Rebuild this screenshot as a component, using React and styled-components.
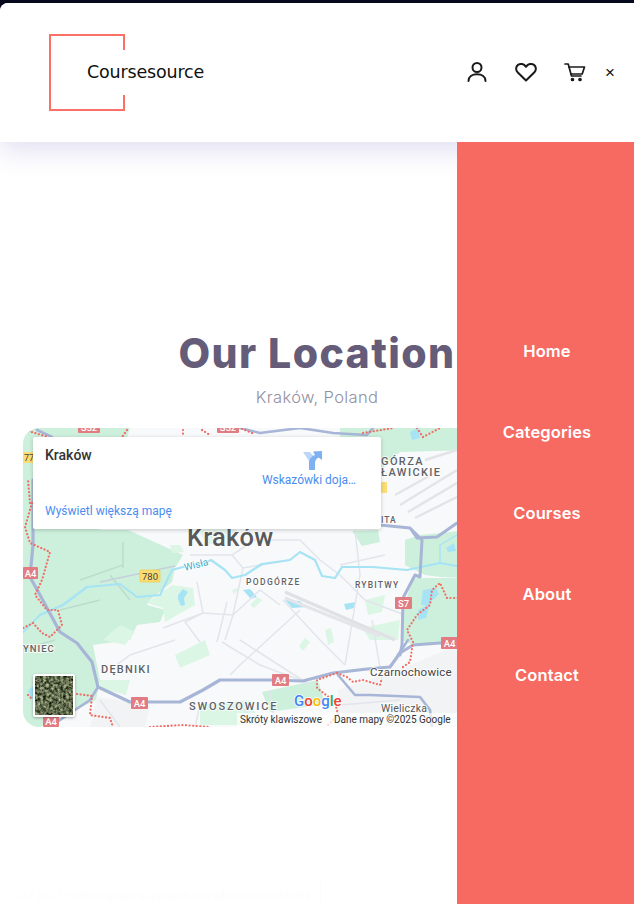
import React from "react";
import styled, { createGlobalStyle } from "styled-components";

const Global = createGlobalStyle`
  html, body { margin: 0; padding: 0; background: #fff; overflow: hidden; }
  * { box-sizing: border-box; }
`;
const Page = styled.div`
  position: relative; width: 634px; height: 904px; overflow: hidden;
  padding-top: 3px; background: #050818; font-family: Inter, "Liberation Sans", sans-serif;
`;
const Surface = styled.div`
  height: 901px; background: #fff; border-radius: 8px 0 0 0; display: flex; flex-direction: column;
`;
const Header = styled.header`
  position: relative; z-index: 2; height: 139px; flex: none; background: #fff; border-radius: 8px 0 0 0;
  box-shadow: 0 8px 28px rgba(70, 60, 170, 0.17);
  display: flex; align-items: center; justify-content: space-between;
  padding: 0 18px 0 49px;
`;
const LogoFrame = styled.a`
  position: relative; width: 76px; height: 77px; display: flex; align-items: center; padding-left: 36px;
  margin-top: -1px; border: solid #fb7168; border-width: 2px 0 2px 2px; text-decoration: none;
  &::before, &::after { content: ""; position: absolute; right: 0; width: 2px; height: 14px; background: #fb7168; }
  &::before { top: 0; }
  &::after { bottom: 0; }
`;
const LogoText = styled.span`
  font: 400 17.5px "DejaVu Sans", sans-serif; color: #111; white-space: nowrap; letter-spacing: -0.18px;
`;
const Tools = styled.div`display: flex; align-items: center; margin-top: -2px;`;
const IconButton = styled.button`
  border: 0; background: none; padding: 0; width: 22px; height: 24px; margin-left: ${p => p.$gap || 0}px;
  display: flex; align-items: center; justify-content: center; color: #1a1a1a;
  svg { display: block; }
`;
const Close = styled.span`
  font: 400 17px "Liberation Sans", sans-serif; color: #111; width: 12px; text-align: center; margin-left: 18px; line-height: 20px; margin-top: 2px;
`;
const Main = styled.main`
  flex: 1; padding: 184px 23px 0; display: flex; flex-direction: column; align-items: center;
`;
const Title = styled.h1`
  margin: 0; font: 800 41px/54px Inter, sans-serif; letter-spacing: 1.4px; color: #645c78; white-space: nowrap;
`;
const Subtitle = styled.p`
  margin: 7px 0 0; font: 300 16.5px/20px Inter, sans-serif; letter-spacing: .35px; color: #92909f;
`;
const MapCard = styled.section`
  position: relative; align-self: stretch; height: 299px; margin-top: 21px; border-radius: 16px; overflow: hidden; background: #f8f9fa;
`;
const MapArt = styled.svg`
  display: block; width: 588px; height: 299px;
  text { font-family: Roboto, sans-serif; }
`;
const InfoCard = styled.div`
  position: absolute; left: 10px; top: 9px; width: 348px; height: 92px; background: #fff; box-shadow: 0 1px 4px rgba(0,0,0,.2);
  border-radius: 2px; padding: 9px 12px; font-family: Roboto, sans-serif;
`;
const Place = styled.div`font-weight: 500; font-size: 14px; line-height: 18px; color: #333;`;
const Directions = styled.a`
  position: absolute; right: 25px; top: 14px; width: 94px; color: #4a8df0; font-size: 12px; line-height: 16px;
  display: flex; flex-direction: column; align-items: center; gap: 1px; white-space: nowrap;
  svg { margin-left: 7px; }
`;
const BigLink = styled.a`
  position: absolute; left: 12px; bottom: 10px; color: #4a8df0; font-size: 12px; line-height: 16px;
`;
const Thumb = styled.div`
  position: absolute; left: 10px; bottom: 10px; width: 42px; height: 43px; border: 2px solid #fff; border-radius: 2px; overflow: hidden; box-shadow: 0 1px 3px rgba(0,0,0,.3);
  svg { display: block; }
`;
const Attribution = styled.div`
  position: absolute; left: 214px; bottom: 0; height: 14px; width: 220px; display: flex; gap: 12px; align-items: center; background: rgba(255,255,255,.7);
  padding: 0 3px; font: 400 10px/14px Roboto, sans-serif; color: #333; white-space: nowrap;
`;
const Drawer = styled.aside`
  position: absolute; z-index: 3; right: 0; top: 142px; bottom: 0; width: 177px; background: #f76a62; padding: 168px 0 0 3px;
  display: flex; flex-direction: column;
`;
const NavItem = styled.a`
  height: 81px; display: flex; align-items: center; justify-content: center; color: #fff;
  font: 600 16.5px Inter, sans-serif; letter-spacing: .12px;
`;
const StatusGhost = styled.div`
  position: absolute; left: 14px; bottom: 0; width: 307px; height: 24px; border-right: 1px solid #fbfbfb; color: #fdfdfd;
  font: 400 11.7px/20px "Open Sans", sans-serif; padding-top: 5px; white-space: nowrap;
`;

const H = "#a7b5d6";
const Dots = ({ d }) => <path d={d} fill="none" stroke="#ef6e66" strokeWidth="2.2" strokeDasharray="0.1 3.5" strokeLinecap="round" />;
const Badge = ({ x, y, t, w = 17 }) => (
  <g>
    <rect x={x} y={y} width={w} height={12} rx="1" fill="#e07c82" />
    <text x={x + w / 2} y={y + 9.5} fontSize="9.5" fontWeight="500" fill="#fff" textAnchor="middle">{t}</text>
  </g>
);
const Label = ({ x, y, t, s = 10, ls = 1, fill = "#5f6368", w = 500 }) => (
  <text x={x} y={y} fontSize={s} fontWeight={w} letterSpacing={ls} fill={fill} stroke="#fff" strokeWidth="2" strokeOpacity=".75" paintOrder="stroke">{t}</text>
);

const MapDrawing = () => (
  <MapArt viewBox="23 428 588 299">
    <rect x="23" y="428" width="588" height="299" fill="#f8f9fa" />
    <g fill="#cdf0dc">
      <path d="M23 428H130L100 530H128L183 555 175 568 172 582 150 600 147 605 165 610 160 622 137 625 130 640 93 645 100 680 96 700 40 727H23Z" />
      <path d="M340 428H470V450L400 452 381 470 340 470Z" />
      <path d="M405 540L420 535 470 530V578L440 577 425 575 405 565Z" />
      <path d="M413 578H470V642L413 645 402 640 403 610Z" />
      <path d="M352 531L378 530 380 542 362 546Z" />
      <path d="M262 692L318 680 325 704 270 712Z" />
      <path d="M190 520H240L235 535 208 545Z" opacity=".5" />
    </g>
    <g fill="#dcf6e6">
      <path d="M172 585L193 588 195 605 165 622 163 608 147 603Z" />
      <path d="M170 545L180 545 184 552 172 553Z" />
      <path d="M232 590L240 587 234 595ZM250 605L258 597 262 600 254 608Z" />
      <path d="M365 600L385 595 382 612 368 615Z" />
      <path d="M362 628L400 620 398 640 370 640Z" />
      <path d="M325 630l6-2 3 14-6 3zM299 646l6-8 5 4-7 9z" />
      <path d="M175 655L205 640 210 655 180 668ZM103 640L120 625 135 632 125 645ZM100 680L130 680 126 695 100 688Z" />
      <path d="M200 705L250 700 260 725H200Z" />
    </g>
    <path d="M338 690L400 670 457 645V727H335Z" fill="#f1f3f4" />
    <path d="M97 697L150 705 145 727H90Z" fill="#f1f3f4" />
    <g fill="#a6e3f5">
      <path d="M178 595l5-6 5 3-4 6 1 7-4 1-3-7zM285 600l15 1 6 6-14 1zM344 604l12-2-2 6-8 2z" />
      <path d="M423 590l13-2 3 6-12 12-6-1zM28 690l8-6 3 10-8 6zM410 432l8-4 2 10-8 2zM418 610l12-6-4 14-8 2z" />
      <path d="M243 590l7-1 7 8-6 2zM446 548l8-5 2 8-8 1z" />
    </g>
    <g fill="none" stroke="#e2e5ec" strokeWidth="1.5">
      <path d="M197 582L203 613 185 622 200 642M227 602L217 642M163 628L203 613 233 615 260 590 280 605M232 555L243 568 233 615 225 640M243 568L290 560M190 555L232 555 255 540M283 600L320 640 345 665M300 610L240 665 230 675M250 540L300 540 320 560 340 575 365 600 405 615M355 530L360 575 345 665M385 555L340 565M372 620L382 680M175 640L130 655 110 670M240 705L260 727M270 690L275 727M200 705L195 727M100 700L120 727M340 705L400 700M240 640L310 685M222 642L260 665 300 680" />
      <path d="M100 582L175 566" stroke="#c6cfdb" />
      <path d="M20 650L55 640M60 610L100 600M123 542V568M130 600L110 575M80 580L123 565" stroke="#bcdccd" />
      <path d="M285 592L395 640" stroke="#e0e1e4" strokeWidth="3.5" />
      <path d="M285 598L380 636" stroke="#e4e5e8" strokeWidth="3" />
      <path d="M400 505L457 470M408 512L457 483M415 518L457 497M395 495L440 470M425 460L457 450" stroke="#e3e4e8" strokeWidth="2.5" />
    </g>
    <g fill="none" stroke="#a5e3f5" strokeLinecap="round" strokeLinejoin="round">
      <path strokeWidth="2.2" d="M23 632L40 615 63 605 87 587 120 584 137 597 160 595 172 570 183 567 207 562 211 560 225 570 232 578 245 575 262 564 290 560 300 552 315 560 322 576 335 578 342 567 373 567 407 570 440 563 457 566" />
      <path strokeWidth="1.4" d="M440 563L440 545 457 535" />
    </g>
    <g fill="none" stroke={H} strokeLinecap="round" strokeLinejoin="round">
      <path strokeWidth="3.2" d="M33 480L33 545 30 577 40 595 60 632 77 643 92 662 98 687 130 702 180 702 203 690 220 680 270 680 303 681 333 673 367 669 390 667 400 653 413 645 440 643 460 643" />
      <path strokeWidth="3" d="M415 575L403 598 402 645 400 655M422 540L420 577 415 575M457 523L437 537 417 538 410 528 380 525M422 540L410 528" />
      <path strokeWidth="2.6" d="M240 428L260 433 300 428 333 433 367 435 373 428M37 430L52 437M98 687L90 700 60 720 50 727M338 675L355 695 370 695 420 697 430 710 432 727M398 655L408 640" />
    </g>
    <Dots d="M32 503L25 527 30 543 50 552 42 580 35 595 47 610 58 610 62 625 50 637 42 633 33 623 23 628" />
    <Dots d="M77 694L92 696 90 715 110 718 113 727M150 727L183 725 210 727M28 695L33 700" />
    <Dots d="M337 673L317 680 317 688 335 702 338 715 328 725M337 673L347 677 353 682 363 680 380 685 382 678" />
    <Dots d="M403 667L410 662 413 642 407 630 417 615 430 605 432 590 440 583 447 598 458 598" />
    <Dots d="M25 430L48 437M127 430L120 440M183 430L183 437M202 430L210 435M363 433L393 428M417 428L423 437 440 428M252 433L240 428M30 503L28 480" />
    <Badge x={78} y={421} t="S52" w={22} />
    <Badge x={217} y={421} t="S52" w={22} />
    <Badge x={23} y={567} t="A4" w={15} />
    <Badge x={131} y={697} t="A4" />
    <Badge x={272} y={674} t="A4" />
    <Badge x={395} y={597} t="S7" />
    <Badge x={441} y={637} t="A4" />
    <Badge x={43} y={715} t="A4" w={16} />
    <rect x="140" y="570" width="20" height="12" rx="1" fill="#fbdd72" stroke="#f1c232" strokeWidth=".6" />
    <text x="150" y="580" fontSize="9.5" textAnchor="middle" fill="#444">780</text>
    <rect x="23" y="452" width="13" height="11" rx="1" fill="#fbdd72" />
    <text x="24" y="461" fontSize="9" fill="#444">77</text>
    <rect x="381" y="482" width="6" height="11" rx="1" fill="#fbdd72" />
    <Label x="23" y="652" t="YNIEC" s={9.5} ls={1} />
    <Label x="101" y="673" t="DĘBNIKI" s={11} ls={1.2} />
    <Label x="189" y="710" t="SWOSZOWICE" s={11} ls={1.85} />
    <Label x="246" y="585" t="PODGÓRZE" s={8.5} ls={1.35} />
    <Label x="355" y="588" t="RYBITWY" s={8.5} ls={1.2} />
    <Label x="381" y="465" t="GÓRZA" s={11} ls={1.4} />
    <Label x="381" y="476" t="ŁAWICKIE" s={11} ls={1.4} />
    <Label x="381" y="523" t="ITA" s={8.5} ls={1} />
    <Label x="370" y="676" t="Czarnochowice" s={11.5} ls={0.25} w={400} fill="#444" />
    <Label x="381" y="712" t="Wieliczka" s={10.5} ls={0.2} w={400} fill="#555" />
    <Label x="187" y="546" t="Kraków" s={25.5} ls={0.2} fill="#5a5a5a" />
    <text x="185" y="571" fontSize="10" fill="#3ba9c7" transform="rotate(-14 185 571)" stroke="#fff" strokeWidth="1.5" paintOrder="stroke">Wisła</text>
    <g fontSize="15" fontWeight="500" stroke="#fff" strokeWidth="1.5" paintOrder="stroke">
      <text x="294" y="706"><tspan fill="#4285f4">G</tspan><tspan fill="#ea4335">o</tspan><tspan fill="#fbbc05">o</tspan><tspan fill="#4285f4">g</tspan><tspan fill="#34a853">l</tspan><tspan fill="#ea4335">e</tspan></text>
    </g>
  </MapArt>
);

const App = () => (
  <Page>
    <Global />
    <Surface>
      <Header>
        <LogoFrame><LogoText>Coursesource</LogoText></LogoFrame>
        <Tools>
          <IconButton>
            <svg width="22" height="22" viewBox="0 0 22 22" fill="none" stroke="currentColor" strokeWidth="2" strokeLinecap="round"><circle cx="11" cy="6.500" r="4.500" /><path d="M2.500 20c0-4 3.500-6.700 8.500-6.700s8.500 2.700 8.500 6.700" /></svg>
          </IconButton>
          <IconButton $gap={27}>
            <svg width="22" height="20" viewBox="0 0 22 20" fill="none" stroke="currentColor" strokeWidth="2" strokeLinejoin="round"><path d="M11 18.500L2.600 10.200C.4 8 .8 4.600 3 2.900c2.500-1.900 5.900-1 8 1.900 2.100-2.900 5.500-3.800 8-1.900 2.200 1.700 2.600 5.100.4 7.300z" /></svg>
          </IconButton>
          <IconButton $gap={27}>
            <svg width="22" height="20" viewBox="0 0 22 20" fill="none" stroke="currentColor" strokeWidth="1.7" strokeLinecap="round" strokeLinejoin="round"><path d="M1 2h3.200l3.300 12h9.500" /><path d="M5 5h15.500l-2.300 7H7" /><circle cx="8.500" cy="17.500" r="1" fill="currentColor" /><circle cx="16" cy="17.500" r="1" fill="currentColor" /></svg>
          </IconButton>
          <Close>×</Close>
        </Tools>
      </Header>
      <Main>
        <Title>Our Location</Title>
        <Subtitle>Kraków, Poland</Subtitle>
        <MapCard>
          <MapDrawing />
          <InfoCard>
            <Place>Kraków</Place>
            <Directions>
              <svg width="20" height="20" viewBox="0 0 20 20"><path d="M0 1h7l5 6v12H6v-9z" fill="#bcd6f8" /><path d="M6 19v-7c0-4 3-7 6-8l-2-3.500L19 0v9l-3.500-2.500C13.500 7.500 12 9.500 12 12v7z" fill="#7fb0f2" /></svg>
              <span>Wskazówki doja…</span>
            </Directions>
            <BigLink>Wyświetl większą mapę</BigLink>
          </InfoCard>
          <Thumb>
            <svg width="38" height="39">
              <filter id="sat" colorInterpolationFilters="sRGB"><feTurbulence type="fractalNoise" baseFrequency=".35" numOctaves="3" seed="4" /><feColorMatrix values="1.1 0 0 0 -.17  1.1 0 0 0 -.13  .95 0 0 0 -.17  0 0 0 0 1" /></filter>
              <rect width="38" height="39" filter="url(#sat)" />
            </svg>
          </Thumb>
          <Attribution><span>Skróty klawiszowe</span><span>Dane mapy ©2025 Google</span></Attribution>
        </MapCard>
      </Main>
    </Surface>
    <StatusGhost>127.0.0.1:5500/capstone-project-template/index.html#</StatusGhost>
    <Drawer>
      <NavItem>Home</NavItem>
      <NavItem>Categories</NavItem>
      <NavItem>Courses</NavItem>
      <NavItem>About</NavItem>
      <NavItem>Contact</NavItem>
    </Drawer>
  </Page>
);

export default App;
